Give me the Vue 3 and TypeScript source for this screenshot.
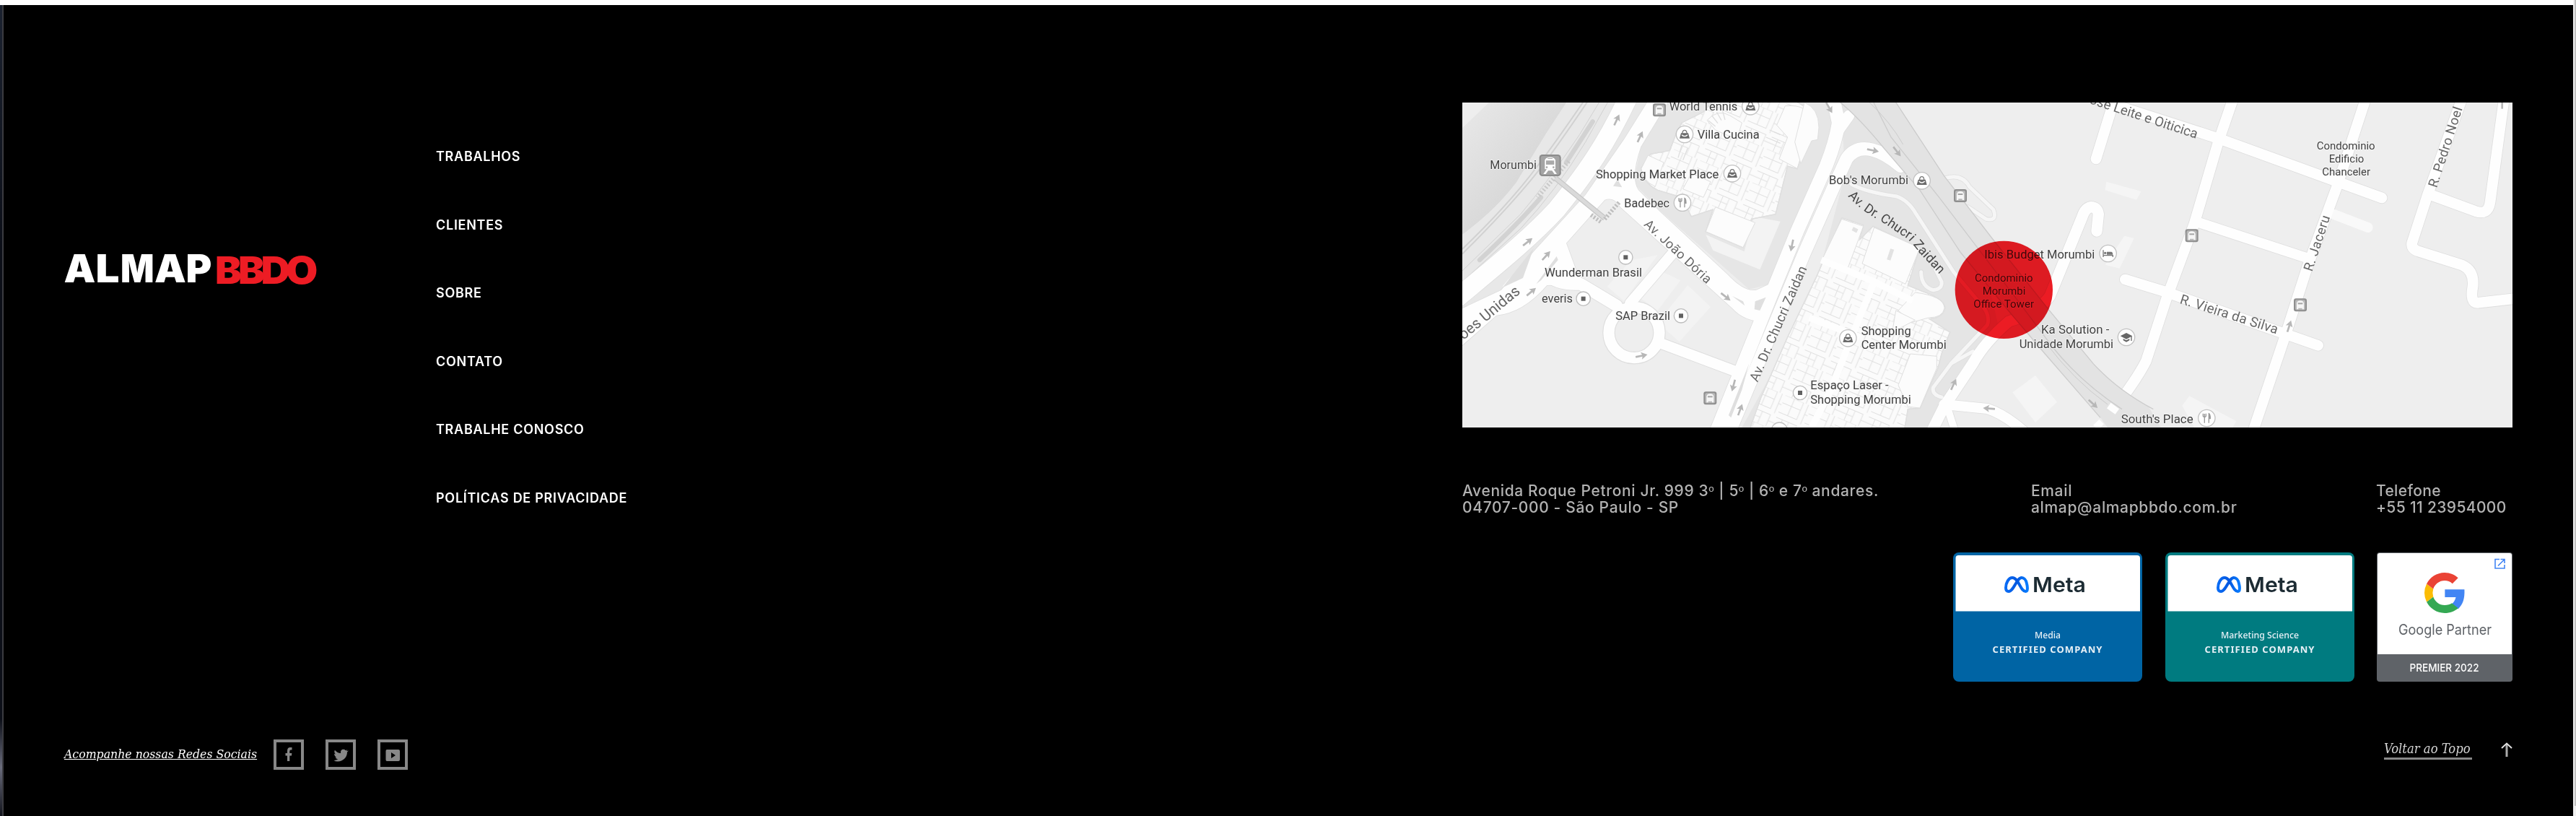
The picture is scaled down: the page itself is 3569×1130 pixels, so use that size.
<script setup lang="ts">
interface Label { t: string; x: number; y: number; w: number; s?: number }
interface Turned { t: string; x: number; y: number; a: number; w?: number; s: number; end?: boolean }
interface Badge { name: string; nameWidth: number; color: string; id: string }
interface Letter { c: string; x: number; k: number }

const links: string[] = ['TRABALHOS', 'CLIENTES', 'SOBRE', 'CONTATO', 'TRABALHE CONOSCO', 'POLÍTICAS DE PRIVACIDADE']

const almap: Letter[] = [
  { c: 'A', x: 88.5, k: 1.04 }, { c: 'L', x: 132.5, k: 1.1 }, { c: 'M', x: 167, k: 0.92 }, { c: 'A', x: 214, k: 1.04 }, { c: 'P', x: 257.5, k: 1.03 },
]
const bbdo: Letter[] = [
  { c: 'B', x: 298, k: 1.06 }, { c: 'B', x: 330, k: 1.06 }, { c: 'D', x: 361.5, k: 1.08 }, { c: 'O', x: 396, k: 1.1 },
]

const badges: Badge[] = [
  { name: 'Media', nameWidth: 36, color: '#0064a4', id: 'media' },
  { name: 'Marketing Science', nameWidth: 108, color: '#007b80', id: 'science' },
]

// Map geometry: three units per screen pixel
const roads: { d: string; w: number }[] = [
  { d: 'M735,20 C650,200 570,320 440,480 C330,600 180,720 30,845', w: 78 },
  { d: 'M1590,20 L1612,120 Q1600,200 1560,300 L1440,570 L1330,840 L1105,1400', w: 56 },
  { d: 'M1870,300 C1800,240 1700,190 1645,270 L1590,390 L1470,660 L1345,960 L1160,1400', w: 54 },
  { d: 'M1655,90 L1612,150', w: 46 },
  { d: 'M920,665 L745,870', w: 44 },
  { d: 'M400,750 Q440,795 540,790 L690,880', w: 50 },
  { d: 'M870,1035 L1190,1155', w: 44 },
  { d: 'M3252,20 L3190,200 L3090,540 L2975,850 L2890,1110 Q2860,1170 2790,1265', w: 44 },
  { d: 'M2690,24 L3190,185 L3870,432', w: 44 },
  { d: 'M2750,50 L2682,270', w: 44 },
  { d: 'M3105,533 L3560,682', w: 42 },
  { d: 'M3803,20 L3685,380 L3560,720 L3470,1000 L3335,1400', w: 44 },
  { d: 'M2803,771 L2970,822 L3605,1045', w: 44 },
  { d: 'M4203,20 L4060,420 L3995,620 Q3992,645 4025,655 L4205,712 Q4255,735 4248,800 Q4235,870 4270,868 L4430,850', w: 44 },
  { d: 'M4075,420 L4260,488 Q4312,505 4320,450 L4378,20', w: 44 },
  { d: 'M2685,570 L2692,500 Q2688,470 2660,470 Q2636,475 2625,510 L2490,840 Q2440,910 2320,945 Q2220,1030 2170,1120 L2050,1300 L2000,1400', w: 46 },
  { d: 'M2050,1290 L2230,1308 Q2300,1330 2380,1400', w: 42 },
  { d: 'M2060,1290 L2095,1400', w: 30 },
]
const junction = 'M820,30 L905,30 L790,220 Q745,350 780,400 L870,490 L1150,750 Q1220,825 1270,815 L1335,785 L1300,945 Q1220,945 1170,890 L910,655 L705,470 Q680,425 640,440 L480,620 L520,730 L560,790 L400,795 Q300,910 190,920 L30,1060 L30,900 L210,815 L345,655 L560,420 L720,190 Z'
const lanes = [
  'M1665,375 Q1730,410 1850,425 Q1900,440 1935,500 L2090,740 L2200,870 Q2245,915 2230,960 L2080,1120 L2005,1220 Q2000,1250 2040,1260',
  'M1955,740 Q1955,800 2005,815 Q2045,810 2040,780 L2010,720',
  'M2055,350 Q2125,330 2155,385 L2255,480 Q2275,530 2225,520 L2150,470',
  'M2080,1120 L2170,1070',
]
const places: Label[] = [
  { t: 'World Tennis', x: 908, y: 70, w: 284 }, { t: 'Villa Cucina', x: 1025, y: 187, w: 258 },
  { t: 'Morumbi', x: 163, y: 313, w: 194 }, { t: 'Shopping Market Place', x: 603, y: 350, w: 511 },
  { t: 'Badebec', x: 721, y: 471, w: 188 }, { t: 'Wunderman Brasil', x: 390, y: 759, w: 405 },
  { t: 'everis', x: 378, y: 867, w: 129 }, { t: 'SAP Brazil', x: 685, y: 938, w: 227 },
  { t: "Bob's Morumbi", x: 1572, y: 376, w: 330 }, { t: 'Ibis Budget Morumbi', x: 2218, y: 683, w: 459 },
  { t: 'Condominio', x: 2178, y: 781, w: 242, s: 44 }, { t: 'Morumbi', x: 2210, y: 835, w: 179, s: 44 },
  { t: 'Office Tower', x: 2173, y: 889, w: 251, s: 44 },
  { t: 'Ka Solution -', x: 2454, y: 997, w: 283 }, { t: 'Unidade Morumbi', x: 2363, y: 1056, w: 391 },
  { t: 'Shopping', x: 1706, y: 1002, w: 207 }, { t: 'Center Morumbi', x: 1706, y: 1060, w: 354 },
  { t: 'Espaço Laser -', x: 1495, y: 1227, w: 325 }, { t: 'Shopping Morumbi', x: 1495, y: 1286, w: 418 },
  { t: "South's Place", x: 2786, y: 1367, w: 300 },
  { t: 'Condominio', x: 3599, y: 232, w: 243, s: 44 }, { t: 'Edificio', x: 3650, y: 286, w: 146, s: 44 },
  { t: 'Chanceler', x: 3622, y: 340, w: 200, s: 44 },
]
const streets: Turned[] = [
  { t: 'Av. João Dória', x: 800, y: 545, a: 43, w: 361, s: 54 },
  { t: 'Av. Dr. Chucri Zaidan', x: 1275, y: 1199, a: -66.5, w: 517, s: 55 },
  { t: 'ões Unidas', x: 292, y: 826, a: -39.6, s: 63, end: true },
  { t: 'Jose Leite e Oiticica', x: 3098, y: 186, a: 18.3, s: 56, end: true },
  { t: 'R. Pedro Noel', x: 4098, y: 392, a: -72, w: 348, s: 55 },
  { t: 'R. Jaceru', x: 3580, y: 740, a: -71.8, w: 240, s: 55 },
  { t: 'R. Vieira da Silva', x: 3028, y: 869, a: 17.7, w: 424, s: 56 },
]
const arrows: [number, number, number][] = [
  [690, 108, -65], [787, 178, -65], [320, 615, -38], [397, 672, -48], [335, 822, -40], [1143, 843, 38],
  [793, 1088, -12], [1418, 630, 102], [1175, 1212, 105], [1203, 1312, -70], [1573, 58, 60], [1755, 235, 12],
  [1855, 240, 52], [2090, 1207, -65], [2237, 1307, 185], [2670, 1288, 42], [3485, 965, -72],
]
const buses: [number, number][] = [[867, 67], [1078, 1264], [2118, 423], [3080, 589], [3531, 877]]
const dots: [number, number][] = [[727, 679], [551, 851], [957, 922], [1452, 1242]]
const bags: [number, number][] = [[1246, 52], [972, 168], [1170, 331], [1958, 361], [1651, 1015]]
const forks: [number, number][] = [[963, 452], [3142, 1347]]
const mallNorth = 'M960,120 L1050,75 L1090,30 L1430,30 Q1500,60 1500,110 L1440,312 L1400,300 L1375,400 L1350,500 L1250,520 L1215,638 L1060,572 L1090,480 L1000,510 L960,430 L860,400 Q800,370 790,310 L830,250 L910,235 L935,170 Z'
const mallSouth = 'M1625,515 L1715,545 L1700,605 L1755,550 L1950,640 L1900,795 L1960,820 Q2050,850 2055,890 Q2045,930 1990,935 L2075,990 L2040,1080 L2025,1140 L1950,1305 L1900,1310 L1885,1400 L1240,1400 L1290,1260 L1400,1010 L1520,760 Z'
</script>

<template>
  <div class="page">
    <div class="edge-left"></div>
    <footer class="footer">
      <div class="upper">
        <a class="brand">
          <svg width="360" height="50" viewBox="84 347 360 50" class="logo">
            <text v-for="l in almap" :key="l.x" class="almap" :transform="`translate(${l.x} 391) scale(${l.k} 1)`">{{ l.c }}</text>
            <text v-for="l in bbdo" :key="l.x" class="bbdo" :transform="`translate(${l.x} 392.500) scale(${l.k} 1)`">{{ l.c }}</text>
          </svg>
        </a>
        <nav class="nav">
          <a v-for="l in links" :key="l">{{ l }}</a>
        </nav>
        <section class="contact">
          <svg class="map" viewBox="48 36 4365 1350" width="1455" height="450">
            <defs>
              <linearGradient id="river" x1="0" y1="0" x2="1" y2="1">
                <stop offset="0" stop-color="#e9e9e9" /><stop offset=".55" stop-color="#d9d9d9" /><stop offset="1" stop-color="#e4e4e4" />
              </linearGradient>
              <pattern id="shops" width="118" height="152" patternUnits="userSpaceOnUse" patternTransform="rotate(23)">
                <path d="M0,0 H82 V34 H0 M82,34 V76 H0 M41,0 V76 M0,100 H28 V152 M28,100 H56 V152 M56,100 H92 V152 M0,126 H56 M104,0 V88 M104,44 H118 M92,126 H118" fill="none" stroke="#e0e0e0" stroke-width="3" />
              </pattern>
              <path id="bend" d="M1650,424 Q1710,490 1790,530 L1895,600 Q1925,628 1948,660 L2060,780" />
            </defs>
            <rect x="48" y="36" width="4365" height="1350" fill="#eeeeee" />
            <path d="M48,142 L165,30 H485 L400,160 Q320,290 275,365 Q190,480 48,585 Z" fill="url(#river)" />
            <path d="M485,30 H960 L800,200 L480,620 L48,1000 V585 Q190,480 275,365 Q320,290 400,160 Z" fill="#e8e8e8" />
            <path d="M905,30 H1600 L1580,250 L1330,790 L1240,812 L870,485 L760,370 L790,220 Z" fill="#e6e6e6" />
            <path d="M1060,585 L1220,655 L1260,510 L1370,530 L1285,730 L1090,650 Z M650,800 L750,690 L860,670 L720,860 Z M870,735 L955,775 L860,900 L790,850 Z M985,795 L1080,885 L950,1030 L860,950 Z" fill="#f3f3f3" />
            <path d="M1620,36 H1850 L2200,640 L2280,980 L2060,1240 L1990,1386 H1210 L1500,860 L1640,330 Z" fill="#e5e5e5" />
            <path d="M2725,365 L2870,405 L2850,440 L2720,400 Z M2800,590 L2840,600 L2780,725 L2720,710 Z M2335,1240 L2430,1170 L2520,1280 L2430,1365 Z M3040,1295 L3070,1255 L3265,1360 L3250,1386 H3090 Z" fill="#f5f5f5" />

            <g fill="none" stroke="#d1d1d1" stroke-width="4">
              <path d="M553,30 Q430,210 360,300 Q250,450 48,645 M570,30 Q445,215 372,310 Q250,465 48,665" stroke-width="6" />
              <path d="M620,30 L535,170 Q400,370 290,500 L48,735 M655,30 L560,200 Q440,400 290,560 L48,780" stroke-width="3" />
              <path d="M590,115 L480,285 M375,430 Q270,550 120,690" stroke="#d2d2d2" stroke-width="19" stroke-linecap="round" />
              <path d="M490,280 L360,430" stroke="#c9c9c9" stroke-width="18" stroke-dasharray="6 8" />
            </g>

            <g fill="none" stroke="#dedede" stroke-linecap="round" stroke-linejoin="round">
              <path v-for="r in roads" :key="r.d" :d="r.d" :stroke-width="r.w + 5" />
              <path :d="junction" stroke-width="5" />
              <circle cx="762" cy="992" r="105" stroke-width="53" />
              <path v-for="l in lanes" :key="l" :d="l" stroke-width="20" />
            </g>
            <path d="M3670,500 L3812,555" fill="none" stroke="#f9f9f9" stroke-width="42" stroke-linecap="round" />
            <g fill="none" stroke="#fefefe" stroke-linecap="round" stroke-linejoin="round">
              <path v-for="l in lanes" :key="l" :d="l" stroke="#f6f6f6" stroke-width="15" />
              <path v-for="r in roads" :key="r.d" :d="r.d" :stroke-width="r.w" />
              <circle cx="762" cy="992" r="105" stroke-width="46" />
            </g>
            <path :d="junction" fill="#fefefe" />
            <path d="M215,800 Q300,690 440,670 L448,685 L395,760 Q300,850 270,800 Z" fill="#fefefe" />
            <path d="M215,805 L345,640 L300,765 Z M355,790 L440,675 L446,690 L375,775 Z M675,383 L693,355 L712,388 Z M1170,840 L1215,862 L1222,880 Z M1265,862 L1310,845 L1285,900 L1262,895 Z M1155,1335 L1240,1120 L1210,1230 L1165,1345 Z" fill="#dfdfdf" />
            <path d="M435,350 L640,517" stroke="#c6c6c6" stroke-width="22" />
            <path d="M435,350 L640,517" stroke="#dadada" stroke-width="15" />
            <path d="M583,503 L625,533 M640,520 L702,448" stroke="#bfbfbf" stroke-width="17" stroke-dasharray="7 7" />

            <path d="M1600,20 Q1690,90 1800,225 L1950,400 L2120,660 L2330,915 L2470,1080 L2700,1345 L2740,1400 H2960 L2900,1300 Q2770,1230 2670,1120 L2480,890 L2250,600 L2050,340 L1840,20 Z" fill="#e3e3e3" />
            <g fill="none" stroke="#cccccc" stroke-width="4">
              <path d="M1600,20 Q1690,90 1800,225 L1950,400 L2120,660 L2330,915 L2470,1080 L2700,1345" />
              <path d="M2920,1310 Q2770,1230 2670,1120 L2480,890 L2250,600 L2050,340 L1840,20" />
              <path d="M1750,20 L1830,180 L2030,430 L2190,640 L2350,850 L2500,1050 Q2620,1200 2790,1310" />
              <path d="M1735,30 Q1830,120 1880,210 M2470,1030 Q2590,1190 2730,1290" stroke-width="3" />
            </g>
            <path d="M2735,1295 L2770,1320 M2680,1386 L2705,1362" stroke="#fefefe" stroke-width="28" />

            <g stroke="#dfdfdf" stroke-width="4">
              <path :d="mallNorth" fill="#fbfbfb" /><path :d="mallSouth" fill="#fbfbfb" />
              <path :d="mallNorth" fill="url(#shops)" /><path :d="mallSouth" fill="url(#shops)" />
              <g fill="#fcfcfc" stroke-width="3">
                <path d="M1390,50 Q1490,40 1500,120 L1440,310 L1365,270 L1400,180 L1355,130 Z" />
                <path d="M1100,470 L1265,535 L1215,638 L1060,572 Z" />
                <path d="M1065,110 Q1110,60 1160,90 L1210,120 L1190,190 L1100,150 Z" />
                <path d="M820,255 L885,285 L850,385 Q795,360 792,310 Z" />
                <path d="M1000,330 L1080,365 L1050,430 L965,395 Z" />
                <path d="M1470,36 Q1530,60 1530,140 L1525,190 L1500,195 L1455,290 L1430,200 Z" />
                <path d="M1625,520 L1715,550 L1650,725 L1545,685 Z" />
                <path d="M1760,555 L1950,640 L1890,790 L1710,705 Z" />
                <path d="M1930,825 Q2050,840 2052,890 Q2045,930 1985,930 L1915,950 L1860,900 Z" />
                <path d="M1910,1080 L2020,1090 L2020,1140 L1950,1305 L1900,1300 L1860,1210 Z" />
                <path d="M1850,900 L1930,940 L1835,990 Z" />
              </g>
              <path d="M1670,560 L1690,570 M1835,645 L1820,690" stroke="#e2e2e2" stroke-width="16" />
              <path d="M1540,690 L1760,780 L1920,860 M1760,780 L1690,950 L1580,1230 L1500,1386 M1490,930 L1700,1010" fill="none" stroke="#fefefe" stroke-width="28" />
              <path d="M1070,110 L1100,135 M1085,90 L1110,122 M1105,75 L1125,110 M1130,70 L1140,108 M960,215 L945,265 M985,225 L965,275 M1310,180 L1370,205 M1325,150 L1370,170" fill="none" />
            </g>

            <g fill="#b7b7b7">
              <path v-for="a in arrows" :key="a.join()" d="M-25,-4 H3 L-1,-15 L25,0 L-1,15 L3,4 H-25 Z" :transform="`translate(${a[0]} ${a[1]}) rotate(${a[2]})`" />
            </g>
            <path d="M4370,36 V62" stroke="#b7b7b7" stroke-width="8" />

            <g v-for="b in buses" :key="b.join()" :transform="`translate(${b[0]} ${b[1]})`">
              <rect x="-27" y="-27" width="54" height="54" rx="9" fill="#8f8f8f" />
              <rect x="-21" y="-21" width="42" height="42" rx="6" fill="#b9b9b9" />
              <path d="M-15,18 V-6 Q-14,-18 0,-18 Q14,-18 15,-6 V18 H8 V13 H-8 V18 Z" fill="#f6f6f6" />
              <path d="M-10,-6 H10" stroke="#a5a5a5" stroke-width="6" />
            </g>
            <g transform="translate(413 297)">
              <rect x="-45" y="-45" width="90" height="90" rx="13" fill="#8c8c8c" />
              <rect x="-39" y="-39" width="78" height="78" rx="9" fill="#a4a4a4" />
              <path d="M-22,16 V-22 Q-18,-34 0,-34 Q18,-34 22,-22 V16 H14 L28,36 H18 L8,22 H-8 L-18,36 H-28 L-14,16 Z" fill="#fff" />
              <path d="M-17,-20 H17 V-3 H-17 Z M-10,-30 H10 V-27 H-10 Z" fill="#aaa" />
              <circle cx="-14" cy="8" r="4" fill="#aaa" /><circle cx="14" cy="8" r="4" fill="#aaa" />
            </g>
            <g v-for="d in dots" :key="d.join()" :transform="`translate(${d[0]} ${d[1]})`">
              <circle r="29" fill="#fff" stroke="#bdbdbd" stroke-width="4" /><rect x="-9" y="-9" width="18" height="18" fill="#616161" />
            </g>
            <g v-for="b in bags" :key="b.join()" :transform="`translate(${b[0]} ${b[1]})`">
              <circle r="35" fill="#fff" stroke="#c2c2c2" stroke-width="4" />
              <path d="M-15,-5 H15 L21,17 H-21 Z" fill="#6b6b6b" /><path d="M-9,-4 Q-9,-17 0,-17 Q9,-17 9,-4" fill="none" stroke="#777" stroke-width="4" />
              <path d="M-12,2 Q0,14 12,2" fill="none" stroke="#fff" stroke-width="4" />
            </g>
            <g v-for="f in forks" :key="f.join()" :transform="`translate(${f[0]} ${f[1]})`">
              <circle r="35" fill="#fff" stroke="#c2c2c2" stroke-width="4" />
              <path d="M-9,20 V-18 M-15,-19 V-8 Q-9,0 -3,-8 V-19" fill="none" stroke="#999" stroke-width="4" />
              <path d="M9,20 V-19 Q15,-17 15,2 H9" fill="#999" stroke="#999" stroke-width="4" />
            </g>
            <g transform="translate(2732 663)">
              <circle r="35" fill="#fff" stroke="#c2c2c2" stroke-width="4" />
              <path d="M-20,-14 V15 M-20,8 H20 V15" fill="none" stroke="#777" stroke-width="4" />
              <path d="M-5,-7 H14 Q20,-6 20,5 H-5 Z" fill="#777" /><circle cx="-12" cy="-2" r="5" fill="#777" />
            </g>
            <g transform="translate(2808 1011)">
              <circle r="35" fill="#fff" stroke="#c2c2c2" stroke-width="4" />
              <path d="M-25,-5 L0,-18 L25,-5 L0,8 Z M-13,6 L0,13 L13,6 V13 L0,20 L-13,13 Z" fill="#666" /><path d="M21,-5 V15" stroke="#666" stroke-width="4" />
            </g>
            <circle cx="1366" cy="1398" r="33" fill="#fff" stroke="#c2c2c2" stroke-width="4" />

            <g class="streets">
              <text v-for="s in streets" :key="s.t" :transform="`translate(${s.x} ${s.y}) rotate(${s.a})`" :font-size="s.s" :textLength="s.w" :text-anchor="s.end ? 'end' : 'start'">{{ s.t }}</text>
              <text font-size="54" class="dark"><textPath href="#bend" textLength="506">Av. Dr. Chucri Zaidan</textPath></text>
            </g>
            <g class="places">
              <text v-for="p in places" :key="p.t + p.x" :x="p.x" :y="p.y" :font-size="p.s ?? 49" :textLength="p.w" lengthAdjust="spacingAndGlyphs">{{ p.t }}</text>
            </g>
            <circle class="pin" cx="2299" cy="814" r="203" />
          </svg>

          <div class="details">
            <p class="addr">Avenida Roque Petroni Jr. 999 3<i>º</i> | 5<i>º</i> | 6<i>º</i> e 7<i>º</i> andares.<br>04707-000 - São Paulo - SP</p>
            <p class="mail">Email<br>almap@almapbbdo.com.br</p>
            <p class="tel">Telefone<br>+55 11 23954000</p>
          </div>

          <div class="badges">
            <svg v-for="b in badges" :key="b.id" width="262" height="179" viewBox="0 0 262 179">
              <defs>
                <linearGradient :id="b.id" x1="0" x2="1"><stop offset="0" stop-color="#0a6cf5" /><stop offset=".5" stop-color="#0457df" /><stop offset="1" stop-color="#087cff" /></linearGradient>
              </defs>
              <rect width="262" height="179" rx="8" :fill="b.color" />
              <path d="M3.500,81.500 V8 Q3.500,4 7.500,4 H255 Q259,4 259,8 V81.500 Z" fill="#fff" />
              <path d="M73,49 C73,42 77,35 82,35 C91,35 93,54 100.500,54 C104,54 103,47 102,43 C101,38 98,35 95,35 C88,35 84,54 77,54 C74,54 73,52 73,49 Z" fill="none" :stroke="`url(#${b.id})`" stroke-width="4" />
              <text x="110" y="55" textLength="74" lengthAdjust="spacingAndGlyphs" class="meta">Meta</text>
              <text x="131" y="119" text-anchor="middle" :textLength="b.nameWidth" lengthAdjust="spacingAndGlyphs" class="kind">{{ b.name }}</text>
              <text x="130.500" y="139" text-anchor="middle" textLength="152" class="cert">CERTIFIED COMPANY</text>
            </svg>
            <svg width="188" height="179" viewBox="0 0 188 179">
              <rect width="188" height="179" rx="4" fill="#5f6368" />
              <path d="M1,141 V4 Q1,1 4,1 H184 Q187,1 187,4 V141 Z" fill="#fff" />
              <g transform="translate(66 28) scale(1.167)">
                <path fill="#4285f4" d="M47.500,20 H24.300 V29.100 H37.300 C36.500,32.500 35,35.300 32.500,37 L40.100,43 C45.500,38 48,31.500 47.500,20 Z" />
                <path fill="#34a853" d="M24,48 C30.500,48 35.900,45.800 40.100,42.200 L32.500,36.200 C30.400,37.700 27.600,38.600 24,38.600 C17.700,38.600 12.400,34.400 10.500,28.700 L2.600,34.800 C6.500,42.600 14.600,48 24,48 Z" />
                <path fill="#fbbc05" d="M10.500,28.700 Q9,24 10.500,19.300 L2.600,13.200 Q-2.600,24 2.600,34.800 Z" />
                <path fill="#ea4335" d="M24,9.500 C27.500,9.500 30.700,10.700 33.200,13.100 L40,6.300 C35.900,2.400 30.500,0 24,0 C14.600,0 6.500,5.400 2.600,13.200 L10.500,19.300 C12.400,13.700 17.700,9.500 24,9.500 Z" />
              </g>
              <path d="M170,9.500 H164 V22 H177 V17 M171.500,9.500 H177 V15 M177,9.500 L168,18.500" fill="none" stroke="#4285f4" stroke-width="1.600" />
              <text x="30" y="114" textLength="129" lengthAdjust="spacingAndGlyphs" class="gp">Google Partner</text>
              <text x="45.500" y="164.500" textLength="96" lengthAdjust="spacingAndGlyphs" class="premier">PREMIER 2022</text>
            </svg>
          </div>
        </section>
      </div>

      <div class="lower">
        <a class="follow">Acompanhe nossas Redes Sociais</a>
        <div class="social">
          <a><svg width="34" height="34" viewBox="0 0 34 34"><path d="M15,26 V18.500 H12.500 V15 H15 V12 Q15,7 19,7 H21.500 V10.500 H19.800 Q18.300,10.500 18.300,12.300 V15 H21.300 L21,18.500 H18.300 V26 Z" fill="#888" /></svg></a>
          <a><svg width="34" height="34" viewBox="0 0 34 34"><path d="M28,11.500 L26,13.500 C26,21 20,26.500 13,26.500 Q9.500,26.500 7.500,25 Q11,25 13.200,23.300 Q10.500,23 9.500,20.500 H11.300 Q8.300,19.500 8.100,15.800 L10,16.400 Q7.300,14 8.900,10.800 Q12.500,15 17.200,15.100 C16,9.500 21.500,8.500 23.800,11.200 L26.300,10.200 L24.900,12.300 Z" fill="#888" /></svg></a>
          <a><svg width="34" height="34" viewBox="0 0 34 34"><path fill-rule="evenodd" d="M9,10 H25 Q27,10 27,12 V24 Q27,26 25,26 H9 Q7.500,26 7.500,24 V12 Q7.500,10 9,10 Z M15,14 L21,18 L15,22 Z" fill="#888" /></svg></a>
        </div>
        <a class="top">Voltar ao Topo</a>
        <svg class="up" width="16" height="20" viewBox="0 0 16 20"><path d="M8,20 V2" stroke="#aaa" stroke-width="3" /><path d="M1,8 L8,1.500 L15,8" fill="none" stroke="#e0e0e0" stroke-width="2" /></svg>
      </div>
    </footer>
    <div class="scroll"><div class="thumb"></div></div>
  </div>
</template>

<style>
body { margin: 0; background: #fff; }
</style>

<style scoped>
.page { width: 3569px; height: 1130px; box-sizing: border-box; padding-top: 7px; display: flex; background: #fff; overflow: hidden; }
.edge-left { width: 3px; border-right: 2px solid #3b3b40; background: linear-gradient(#1b2230, #0c0f18 30%, #0c0f18 88%, #6a6c7c 94%, #11131b); }
.footer { width: 3560px; height: 1123px; background: #000; display: flex; flex-direction: column; }
.upper { display: flex; height: 1017px; padding-left: 79px; box-sizing: border-box; }
.brand { width: 520px; padding-top: 340px; }
.logo { display: block; overflow: visible; }
.almap, .bbdo { font-family: Inter, sans-serif; font-weight: 900; font-size: 53px; fill: #fff; }
.bbdo { fill: #ed1c24; font-size: 52px; }
.nav { width: 1422px; padding-top: 198px; display: flex; flex-direction: column; gap: 70.500px; }
.nav a { height: 24px; line-height: 24px; font-family: Inter, sans-serif; font-weight: 600; font-size: 18px; letter-spacing: 0.720px; color: #fff; white-space: nowrap; }
.contact { width: 1455px; padding-top: 135px; }
.map { display: block; font-family: Roboto, sans-serif; overflow: hidden; }
.places text { fill: #404040; stroke: #f6f6f6; stroke-width: 5; paint-order: stroke; stroke-linejoin: round; }
.streets text { fill: #666; }
.streets .dark { fill: #444; }
.pin { fill: #ed1c24; mix-blend-mode: multiply; }
.details { display: flex; margin-top: 76px; height: 46px; font: 500 21px/23px Inter, sans-serif; letter-spacing: 0.650px; color: #b2b2b2; white-space: nowrap; }
.details p { margin: 0; }
.details i { font: 400 19px/1 "Liberation Sans", sans-serif; }
.addr { width: 788px; }
.mail { width: 478px; }
.tel { letter-spacing: 0.350px; }
.badges { display: flex; justify-content: flex-end; gap: 31.500px; margin-top: 51px; }
.badges svg { display: block; }
.meta { font: 600 29px Inter, sans-serif; fill: #1c2b33; }
.kind { font: 500 13px "Noto Sans", sans-serif; fill: #e6f0f6; }
.cert { font: 700 13px "Noto Sans", sans-serif; fill: #e6f0f6; }
.gp { font: 400 20px Inter, sans-serif; fill: #5f6368; }
.premier { font: 500 15px Inter, sans-serif; fill: #fff; }
.lower { display: flex; padding-left: 84px; align-items: flex-start; }
.follow { width: 290px; padding-top: 8px; font: italic 17.500px/24px "DejaVu Serif Condensed", "DejaVu Serif", serif; color: #fff; text-decoration: underline; white-space: nowrap; }
.social { display: flex; gap: 30px; width: 2924px; }
.social a { width: 34px; height: 34px; border: 4px solid #888; }
.social svg { display: block; }
.top { width: 122px; height: 22px; margin-top: 3px; font: italic 18.300px/20px "DejaVu Serif Condensed", "DejaVu Serif", serif; color: #d4d4d4; border-bottom: 3px solid #888; white-space: nowrap; }
.up { display: block; margin: 4px 0 0 40px; }
.scroll { width: 4px; margin-top: -7px; background: #f1f1f1; display: flex; justify-content: flex-end; }
.thumb { width: 2px; height: 1116px; background: #c1c1c1; }
</style>
